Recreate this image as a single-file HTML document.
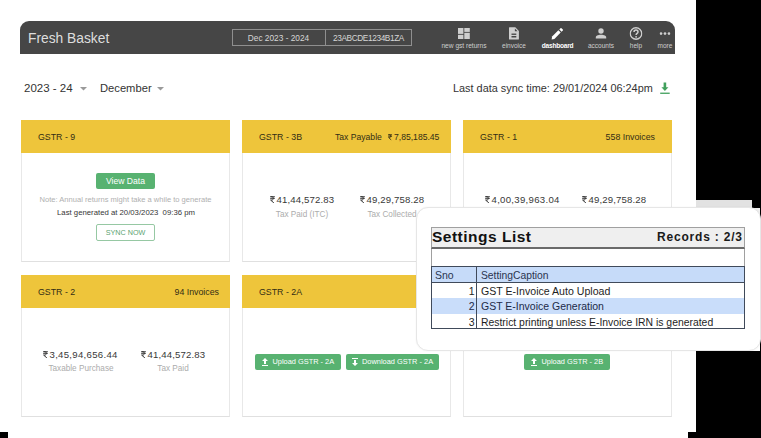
<!DOCTYPE html>
<html><head><meta charset="utf-8">
<style>
*{box-sizing:border-box;margin:0;padding:0}
html,body{width:761px;height:438px;overflow:hidden;background:#fff}
body{position:relative;font-family:"Liberation Sans",sans-serif;color:#333}
.a{position:absolute;white-space:nowrap}
.blk{position:absolute;background:#000}
.hdr{position:absolute;left:20px;top:21px;width:655px;height:33px;background:#464646;border-radius:9px 9px 0 0}
.card{position:absolute;width:209px;height:142px;border:1px solid #e8e8e8;border-bottom-color:#e0e0e0;background:#fff}
.ch{position:absolute;left:-1px;top:-1px;right:-1px;height:33px;background:#eec53b}
.ch .t{position:absolute;left:17px;top:12px;font-size:8.8px;color:#332d15;line-height:10px;white-space:nowrap}
.ch .r{position:absolute;right:13px;top:12px;font-size:8.8px;color:#332d15;line-height:10px;white-space:nowrap}
.amt{position:absolute;font-size:9.6px;letter-spacing:0.15px;color:#383838;line-height:12px;white-space:nowrap}
.amt svg{position:absolute;left:0;top:1.5px}
.amt span{position:absolute;top:0}
.lbl{position:absolute;font-size:8.2px;color:#acacac;line-height:10px;white-space:nowrap;text-align:center}
.btn{position:absolute;background:#58b271;color:#fff;border-radius:2px;font-size:7.4px;line-height:16px;white-space:nowrap}
.btn svg{position:absolute;left:7px;top:4px}
.nav{position:absolute;top:26px;height:26px;text-align:center;color:#cfcfcf;font-size:6.5px}
.nav .l{position:absolute;left:0;right:0;top:16px;line-height:8px}
.nav svg{position:absolute;left:50%;top:1px;transform:translateX(-50%)}
.tb{position:absolute;font-size:10.5px;line-height:13px;color:#1e1e1e;white-space:nowrap}
</style></head><body>
<svg width="0" height="0" style="position:absolute">
<defs>
<symbol id="rup" viewBox="0 0 10 14"><path d="M0.3 1.1H9.7" fill="none" stroke="#333" stroke-width="2.2"/><path d="M0.3 4.7H9.7" fill="none" stroke="#333" stroke-width="1.6"/><path d="M1.5 1.2H4C7.6 1.2 7.8 7.8 3.8 7.8H1.2L7.8 13.6" fill="none" stroke="#333" stroke-width="2"/></symbol>
<symbol id="rupd" viewBox="0 0 10 14"><path d="M0.5 1.2H9.5M0.5 4.6H9.5M1.2 1.2H3.8C7.6 1.2 7.8 7.6 3.6 7.6H1.4L7.6 13.4" fill="none" stroke="#332d15" stroke-width="2"/></symbol>
<symbol id="up" viewBox="0 0 6 8"><path d="M3 0L6 3H4V6H2V3H0Z" fill="#fff"/><rect x="0" y="7" width="6" height="1" fill="#fff"/></symbol>
<symbol id="dn" viewBox="0 0 6 8"><rect x="0" y="0" width="6" height="1" fill="#fff"/><path d="M2 2H4V5H6L3 8L0 5H2Z" fill="#fff"/></symbol>
</defs></svg>

<!-- transparent (black) regions -->
<div class="blk" style="left:696px;top:0;width:65px;height:200px"></div>
<div class="a" style="left:696px;top:200px;width:56px;height:8px;background:#e2e2e2"></div>
<div class="blk" style="left:752px;top:200px;width:9px;height:8px"></div>
<div class="a" style="left:752px;top:208px;width:8px;height:8px;background:#f0f0f0"></div>
<div class="blk" style="left:760px;top:208px;width:1px;height:143px"></div>
<div class="blk" style="left:696px;top:351px;width:65px;height:87px"></div>
<div class="blk" style="left:688px;top:432px;width:73px;height:6px"></div>
<div class="blk" style="left:0;top:432px;width:8px;height:6px"></div>

<!-- header -->
<div class="hdr"></div>
<div class="a" style="left:28px;top:30.5px;font-size:13.8px;line-height:16px;color:#dedede">Fresh Basket</div>
<div class="a" style="left:232px;top:29px;width:180px;height:16.5px;border:1px solid #8f8f8f"></div>
<div class="a" style="left:325px;top:29px;width:1px;height:16.5px;background:#8f8f8f"></div>
<div class="a" style="left:232px;top:33px;width:93px;text-align:center;font-size:8.3px;line-height:10px;color:#d6d6d6">Dec 2023 - 2024</div>
<div class="a" style="left:325px;top:33px;width:87px;text-align:center;font-size:8.3px;letter-spacing:-0.4px;line-height:10px;color:#d6d6d6">23ABCDE1234B1ZA</div>

<!-- nav -->
<div class="nav" style="left:439.5px;width:49px;font-size:6.6px">
  <svg width="12" height="11" viewBox="0 0 12 11" style="margin-left:-0.5px;top:1.9px"><rect x="0" y="0" width="5.4" height="5.9" fill="#cfcfcf"/><rect x="6.3" y="0" width="5.5" height="3.9" fill="#cfcfcf"/><rect x="0" y="6.8" width="5.4" height="4.2" fill="#cfcfcf"/><rect x="6.3" y="4.8" width="5.5" height="6.2" fill="#cfcfcf"/></svg>
  <div class="l">new gst returns</div>
</div>
<div class="nav" style="left:499px;width:30px">
  <svg width="11" height="13" viewBox="0 0 11 13"><path d="M0.5 0.8Q0.5 0.3 1 0.3H6.8L10.4 3.9V12.1Q10.4 12.6 9.9 12.6H1Q0.5 12.6 0.5 12.1Z" fill="#cfcfcf"/><path d="M6.4 1.6L9.1 4.3H6.4Z" fill="#464646"/><rect x="3" y="6.5" width="4.8" height="1.5" fill="#555"/><rect x="3" y="9" width="4.8" height="1.5" fill="#464646"/></svg>
  <div class="l">einvoice</div>
</div>
<div class="nav" style="left:540px;width:35px;color:#fff;font-weight:bold;font-size:6.6px;letter-spacing:-0.25px">
  <svg width="12" height="12" viewBox="0 0 12 12" style="margin-left:-1px;top:1.8px"><path d="M0.6 11.4L1.1 8.6L7.4 2.3L9.7 4.6L3.4 10.9Z" fill="#fff"/><path d="M8.3 1.4L9.5 0.2Q10 -0.2 10.5 0.2L11.8 1.5Q12.2 2 11.8 2.5L10.6 3.7Z" fill="#fff"/></svg>
  <div class="l">dashboard</div>
</div>
<div class="nav" style="left:586px;width:30px">
  <svg width="11" height="11" viewBox="0 0 11 11" style="top:2px"><circle cx="5.5" cy="3" r="2.7" fill="#cfcfcf"/><path d="M0 10.5C0 7.5 2.5 6.8 5.5 6.8S11 7.5 11 10.5Z" fill="#cfcfcf"/></svg>
  <div class="l">accounts</div>
</div>
<div class="nav" style="left:624px;width:24px">
  <svg width="13" height="13" viewBox="0 0 13 13"><circle cx="6.5" cy="6.5" r="5.75" fill="none" stroke="#cfcfcf" stroke-width="1.3"/><path d="M4.5 5.1C4.5 3.8 5.4 3.1 6.5 3.1S8.5 3.8 8.5 5C8.5 6.4 6.6 6.5 6.6 8" fill="none" stroke="#cfcfcf" stroke-width="1.5"/><circle cx="6.6" cy="9.8" r="0.9" fill="#cfcfcf"/></svg>
  <div class="l">help</div>
</div>
<div class="nav" style="left:654px;width:22px">
  <svg width="11" height="12" viewBox="0 0 11 12"><circle cx="1.5" cy="6.6" r="1.35" fill="#cfcfcf"/><circle cx="5.5" cy="6.6" r="1.35" fill="#cfcfcf"/><circle cx="9.5" cy="6.6" r="1.35" fill="#cfcfcf"/></svg>
  <div class="l">more</div>
</div>

<!-- filter row -->
<div class="a" style="left:24px;top:82px;font-size:11.5px;line-height:13px;color:#333">2023 - 24</div>
<svg class="a" style="left:80px;top:87px" width="7" height="4" viewBox="0 0 7 4"><path d="M0 0H7L3.5 3.6Z" fill="#9a9a9a"/></svg>
<div class="a" style="left:100px;top:82px;font-size:11.2px;line-height:13px;color:#333">December</div>
<svg class="a" style="left:157px;top:87px" width="7" height="4" viewBox="0 0 7 4"><path d="M0 0H7L3.5 3.6Z" fill="#9a9a9a"/></svg>
<div class="a" style="left:453px;top:82px;font-size:10.9px;line-height:13px;color:#333">Last data sync time: 29/01/2024 06:24pm</div>
<svg class="a" style="left:660px;top:82px" width="10" height="13" viewBox="0 0 10 13"><path d="M3.6 0.6H6.2V5.2H8.4L4.9 8.9L1.4 5.2H3.6Z" fill="#41a05c"/><rect x="0.2" y="10.6" width="9.5" height="1.3" fill="#41a05c"/></svg>

<!-- row 1 cards -->
<div class="card" style="left:21px;top:120px">
  <div class="ch"><div class="t">GSTR - 9</div></div>
</div>
<div class="btn" style="left:96px;top:173px;width:59px;height:16px;text-align:center;font-size:8.6px">View Data</div>
<div class="a" style="left:39px;top:195px;width:173px;text-align:center;font-size:7.57px;line-height:9px;color:#b0b0b0">Note: Annual returns might take a while to generate</div>
<div class="a" style="left:57px;top:208px;width:138px;text-align:center;font-size:7.75px;line-height:10px;color:#363636">Last generated at 20/03/2023&nbsp; 09:36 pm</div>
<div class="a" style="left:96px;top:224px;width:59px;height:17px;border:1px solid #96c8a3;border-radius:2px;text-align:center;font-size:7.2px;line-height:15px;color:#5aa270">SYNC NOW</div>

<div class="card" style="left:242px;top:120px">
  <div class="ch"><div class="t">GSTR - 3B</div></div>
</div>
<div class="a" style="left:335px;top:132px;font-size:8.6px;line-height:10px;color:#332d15">Tax Payable</div>
<svg class="a" style="left:388.3px;top:134px" width="4.3" height="6.5"><use href="#rupd"/></svg>
<div class="a" style="left:394px;top:132px;font-size:8.6px;line-height:10px;color:#332d15">7,85,185.45</div>

<div class="card" style="left:463px;top:120px">
  <div class="ch"><div class="t">GSTR - 1</div><div class="r" style="right:17px">558 Invoices</div></div>
</div>

<!-- row 2 cards -->
<div class="card" style="left:21px;top:275px">
  <div class="ch"><div class="t">GSTR - 2</div><div class="r" style="right:11px">94 Invoices</div></div>
</div>
<div class="card" style="left:242px;top:275px">
  <div class="ch"><div class="t">GSTR - 2A</div></div>
</div>
<div class="card" style="left:463px;top:275px">
  <div class="ch"><div class="t">GSTR - 2B</div></div>
</div>

<!-- amounts -->
<div class="amt" style="left:270px;top:194px"><svg width="5" height="7.3"><use href="#rup"/></svg><span style="left:6.5px">41,44,572.83</span></div>
<div class="lbl" style="left:272px;top:209.5px;width:60px">Tax Paid (ITC)</div>
<div class="amt" style="left:360px;top:194px"><svg width="5" height="7.3"><use href="#rup"/></svg><span style="left:6.5px">49,29,758.28</span></div>
<div class="lbl" style="left:362px;top:209.5px;width:60px">Tax Collected</div>
<div class="amt" style="left:485px;top:194px"><svg width="5" height="7.3"><use href="#rup"/></svg><span style="left:6.5px;letter-spacing:0.3px">4,00,39,963.04</span></div>
<div class="amt" style="left:582px;top:194px"><svg width="5" height="7.3"><use href="#rup"/></svg><span style="left:6.5px">49,29,758.28</span></div>
<div class="amt" style="left:43px;top:349px"><svg width="5" height="7.3"><use href="#rup"/></svg><span style="left:6.5px;letter-spacing:0.3px">3,45,94,656.44</span></div>
<div class="lbl" style="left:40px;top:364px;width:82px">Taxable Purchase</div>
<div class="amt" style="left:141px;top:349px"><svg width="5" height="7.3"><use href="#rup"/></svg><span style="left:6.5px">41,44,572.83</span></div>
<div class="lbl" style="left:143px;top:364px;width:60px">Tax Paid</div>

<!-- upload buttons -->
<div class="btn" style="left:255px;top:354px;width:86px;height:16px;padding-left:17.5px"><svg width="6" height="8"><use href="#up"/></svg>Upload GSTR - 2A</div>
<div class="btn" style="left:346px;top:354px;width:93px;height:16px;padding-left:16px"><svg width="6" height="8" style="left:6px"><use href="#dn"/></svg>Download GSTR - 2A</div>
<div class="btn" style="left:524px;top:354px;width:86px;height:16px;padding-left:17.5px"><svg width="6" height="8"><use href="#up"/></svg>Upload GSTR - 2B</div>

<!-- settings panel -->
<div class="a" style="left:415.5px;top:207px;width:345px;height:144px;background:#fff;border-radius:12px;border:1px solid #e6e6e6;box-shadow:0 0 2px rgba(0,0,0,0.06)"></div>
<div class="a" style="left:431px;top:227px;width:314px;height:22px;border:1px solid #a0a0a0;border-bottom:2px solid #6a6a6a;background:#efefef"></div>
<div class="a" style="left:432px;top:228px;font-size:15.5px;font-weight:bold;line-height:17px;color:#111;letter-spacing:0.5px">Settings List</div>
<div class="a" style="left:657px;top:229.5px;font-size:12px;font-weight:bold;line-height:14px;color:#1a1a1a;letter-spacing:0.8px">Records : 2/3</div>
<div class="a" style="left:431px;top:249px;width:314px;height:18px;border-left:1px solid #a0a0a0;border-right:1px solid #a0a0a0;background:#fff"></div>
<div class="a" style="left:431px;top:266px;width:314px;height:63px;border:1px solid #404a5a;background:#fff"></div>
<div class="a" style="left:432px;top:267px;width:312px;height:16px;background:#c6dbf9;border-bottom:1px solid #404a5a"></div>
<div class="a" style="left:432px;top:298px;width:312px;height:16px;background:#c9ddfa"></div>
<div class="a" style="left:476px;top:267px;width:1px;height:61px;background:#404a5a"></div>
<div class="tb" style="left:435px;top:269px;color:#2a3550">Sno</div>
<div class="tb" style="left:481px;top:269px;color:#2a3550;font-size:10.3px">SettingCaption</div>
<div class="tb" style="left:432px;top:285px;width:42.5px;text-align:right">1</div>
<div class="tb" style="left:432px;top:300px;width:42.5px;text-align:right;color:#1c2a48">2</div>
<div class="tb" style="left:432px;top:316px;width:42.5px;text-align:right">3</div>
<div class="tb" style="left:481px;top:285px;font-size:10.6px">GST E-Invoice Auto Upload</div>
<div class="tb" style="left:481px;top:300px;color:#1c2a48">GST E-Invoice Generation</div>
<div class="tb" style="left:481px;top:316px;font-size:10.4px">Restrict printing unless E-Invoice IRN is generated</div>

</body></html>
